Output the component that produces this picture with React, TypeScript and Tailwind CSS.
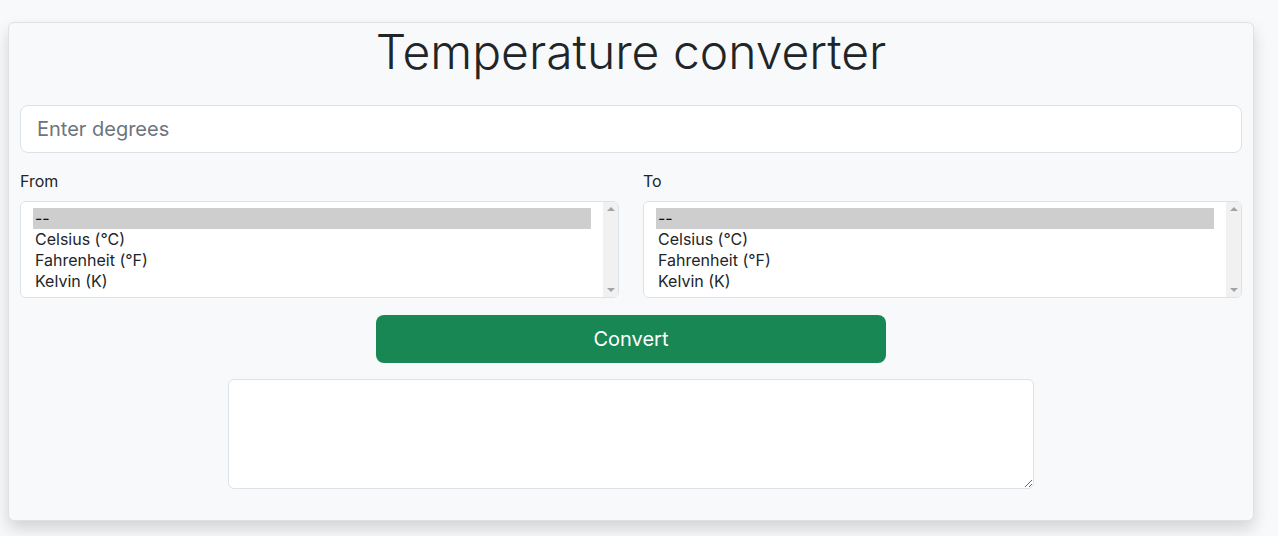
import { useState } from 'react';

const units = ['--', 'Celsius (°C)', 'Fahrenheit (°F)', 'Kelvin (K)'];

function UnitSelect({ label }: { label: string }) {
  const [value, setValue] = useState('--');

  return (
    <div className="flex-1 min-w-0">
      <label className="block mb-2 text-base leading-6 text-[#212529]">{label}</label>
      <div className="relative">
        <select
          size={4}
          value={value}
          onChange={(e) => setValue(e.target.value)}
          className="block w-full h-[97px] pl-3 pr-[27px] py-[6px] bg-white border border-[#dee2e6] rounded-[6px] text-base text-[#212529] outline-none"
        >
          {units.map((u) => (
            <option key={u} value={u} className="px-[2px] pt-0 pb-[1px] leading-5">
              {u}
            </option>
          ))}
        </select>
        {/* fake scrollbar, headless chrome hides the native one */}
        <div className="pointer-events-none absolute right-px top-px bottom-px w-[15px] rounded-r-[5px] bg-[#f1f1f1] flex flex-col items-center justify-between py-[5px]">
          <span className="w-0 h-0 border-x-[4px] border-x-transparent border-b-[4px] border-b-[#a3a3a3]" />
          <span className="w-0 h-0 border-x-[4px] border-x-transparent border-t-[4px] border-t-[#a3a3a3]" />
        </div>
      </div>
    </div>
  );
}

export default function App() {
  return (
    <div
      className="min-h-[536px] bg-[#f8f9fa] pt-[22px] px-2 text-[#212529]"
      style={{ fontFamily: 'Inter, "Noto Sans", sans-serif' }}
    >
      <div className="w-[1246px] bg-[#f8f9fa] border border-[#dee2e6] rounded-[6px] shadow-[0_8px_16px_rgba(0,0,0,0.15)] px-[11px] pb-[31px]">
        <h1 className="text-center text-[48px] leading-[1.2] font-light mb-6">Temperature converter</h1>

        <input
          type="text"
          placeholder="Enter degrees"
          className="block w-full h-12 px-4 bg-white border border-[#dee2e6] rounded-[8px] text-xl placeholder:text-[#6c757d] outline-none"
        />

        <div className="flex gap-6 mt-4">
          <UnitSelect label="From" />
          <UnitSelect label="To" />
        </div>

        <div className="flex flex-col items-center mt-[17px] gap-4">
          <button className="w-[510px] h-12 bg-[#198754] text-white text-xl rounded-[8px]">Convert</button>
          <textarea className="block w-[806px] h-[110px] bg-white border border-[#dee2e6] rounded-[6px] outline-none" />
        </div>
      </div>
    </div>
  );
}
